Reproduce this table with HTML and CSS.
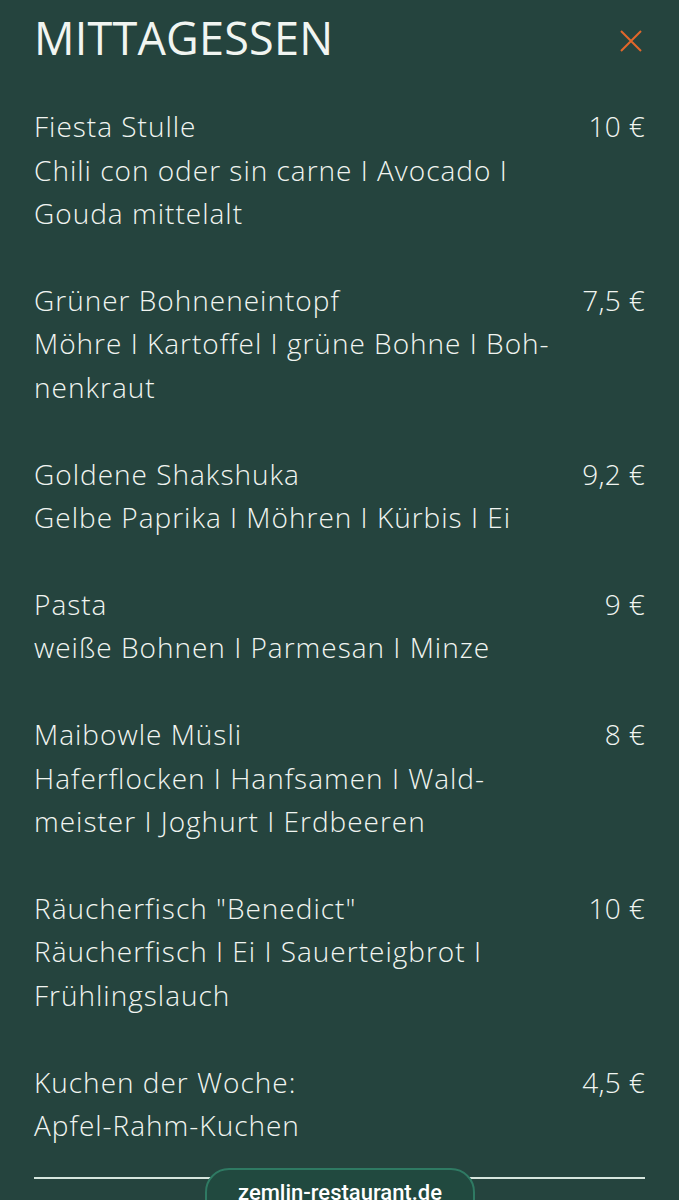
FILE: index.html
```html
<!DOCTYPE html>
<html lang="de">
<head>
    <meta charset="UTF-8">
    <meta name="viewport" content="width=device-width, initial-scale=1.0">
    <title>Mittagessen</title>
    <link rel="stylesheet" href="styles.css">
</head>
<body>
    <div class="menu">
        <div class="menu-header">
            <h1>MITTAGESSEN</h1>
            <button class="close" aria-label="Schließen">
                <svg width="24" height="24" viewBox="0 0 24 24">
                    <path d="M2 2 L22 22 M22 2 L2 22" stroke="#e2672b" stroke-width="2" fill="none"/>
                </svg>
            </button>
        </div>

        <ul class="dishes">
            <li class="dish">
                <div class="dish-text">
                    <div class="dish-name">Fiesta Stulle</div>
                    <div class="dish-desc">Chili con oder sin carne I Avocado I<br>Gouda mittelalt</div>
                </div>
                <div class="dish-price">10 €</div>
            </li>
            <li class="dish">
                <div class="dish-text">
                    <div class="dish-name">Grüner Bohneneintopf</div>
                    <div class="dish-desc">Möhre I Kartoffel I grüne Bohne I Boh-<br>nenkraut</div>
                </div>
                <div class="dish-price">7,5 €</div>
            </li>
            <li class="dish">
                <div class="dish-text">
                    <div class="dish-name">Goldene Shakshuka</div>
                    <div class="dish-desc">Gelbe Paprika I Möhren I Kürbis I Ei</div>
                </div>
                <div class="dish-price">9,2 €</div>
            </li>
            <li class="dish">
                <div class="dish-text">
                    <div class="dish-name">Pasta</div>
                    <div class="dish-desc">weiße Bohnen I Parmesan I Minze</div>
                </div>
                <div class="dish-price">9 €</div>
            </li>
            <li class="dish">
                <div class="dish-text">
                    <div class="dish-name">Maibowle Müsli</div>
                    <div class="dish-desc">Haferflocken I Hanfsamen I Wald-<br>meister I Joghurt I Erdbeeren</div>
                </div>
                <div class="dish-price">8 €</div>
            </li>
            <li class="dish">
                <div class="dish-text">
                    <div class="dish-name">Räucherfisch "Benedict"</div>
                    <div class="dish-desc">Räucherfisch I Ei I Sauerteigbrot I<br>Frühlingslauch</div>
                </div>
                <div class="dish-price">10 €</div>
            </li>
            <li class="dish">
                <div class="dish-text">
                    <div class="dish-name">Kuchen der Woche:</div>
                    <div class="dish-desc">Apfel-Rahm-Kuchen</div>
                </div>
                <div class="dish-price">4,5 €</div>
            </li>
        </ul>

        <hr class="divider">
    </div>

    <a class="site-pill" href="#">zemlin-restaurant.de</a>
</body>
</html>
```

FILE: styles.css
```css
body {
    margin: 0;
    background-color: #25443e;
    color: #f1f5f1;
    font-family: "Open Sans", sans-serif;
    font-weight: 300;
}
.menu {
    padding: 12px 34px 0 34px;
}
.menu-header {
    display: flex;
    justify-content: space-between;
    align-items: center;
    height: 52px;
}
.menu-header h1 {
    margin: 0;
    font-size: 45px;
    font-weight: 400;
    letter-spacing: 0.2px;
    line-height: 52px;
}
.close {
    background: none;
    border: none;
    padding: 0;
    margin-right: 2px;
    margin-top: 6px;
    width: 24px;
    height: 24px;
    cursor: pointer;
}
.close svg {
    display: block;
}
.dishes {
    list-style: none;
    margin: 41px 0 0 0;
    padding: 0;
}
.dish {
    display: flex;
    justify-content: space-between;
    font-size: 28px;
    letter-spacing: 1px;
    line-height: 43.5px;
    margin-bottom: 43.3px;
}
.dish:last-child {
    margin-bottom: 0;
}
.dish-text {
    white-space: nowrap;
}
.dish-price {
    white-space: nowrap;
    letter-spacing: 0.3px;
}
.divider {
    margin: 29px 0 0 0;
    border: none;
    border-top: 2px solid #d6e6de;
}
.site-pill {
    position: fixed;
    left: 205px;
    top: 1168px;
    width: 270px;
    height: 60px;
    box-sizing: border-box;
    border: 2px solid #2f7a63;
    border-radius: 24px;
    background-color: #21493f;
    color: #ffffff;
    font-family: Roboto, sans-serif;
    font-weight: 500;
    font-size: 22px;
    text-align: center;
    padding-top: 10px;
    text-decoration: none;
}
```
